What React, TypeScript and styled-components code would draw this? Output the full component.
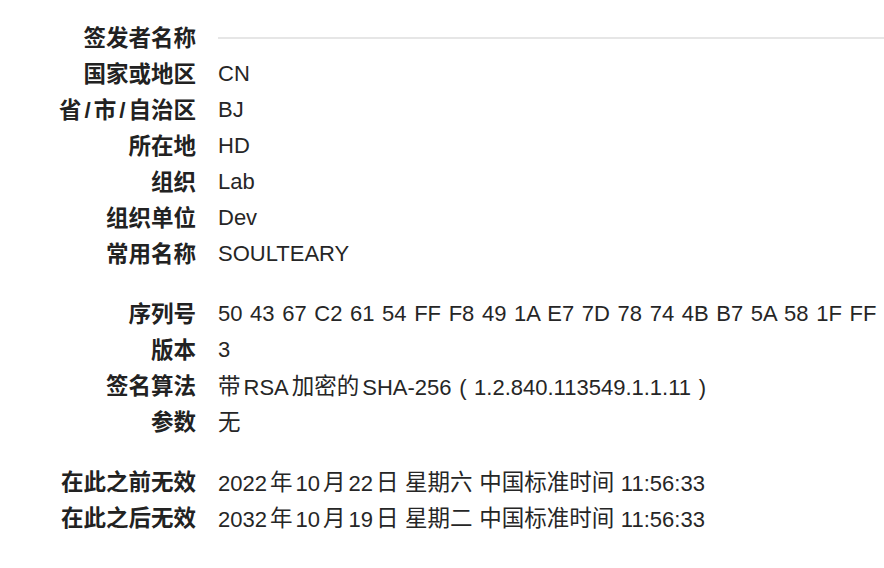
import React from "react";
import styled, { createGlobalStyle } from "styled-components";

const Global = createGlobalStyle`
  html, body { margin: 0; padding: 0; background: #ffffff; }
  body {
    font-family: "Liberation Sans", "Noto Sans CJK SC", sans-serif;
    color: #262626;
  }
`;

const Page = styled.div`
  width: 884px;
  height: 568px;
  padding-top: 20px;
  box-sizing: border-box;
  display: flex;
  flex-direction: column;
  gap: 24px;
  overflow: hidden;
`;

const Section = styled.div`
  display: grid;
  grid-template-columns: 196px 1fr;
  column-gap: 22px;
`;

const Label = styled.div`
  font-family: "Noto Sans CJK SC", "Liberation Sans", sans-serif;
  font-weight: 700;
  font-size: 22.5px;
  line-height: 32px;
  height: 36px;
  text-align: right;
  white-space: nowrap;
  color: #222222;
`;

const Slash = styled.span`
  font-family: "Liberation Sans", sans-serif;
  margin: 0 3px;
`;

const Value = styled.div<{ $spread?: number }>`
  font-family: "Liberation Sans", "Noto Sans CJK SC", sans-serif;
  font-size: 22px;
  line-height: 36px;
  height: 36px;
  white-space: nowrap;
  color: #262626;
  word-spacing: ${(p) => p.$spread ?? 0}px;
  display: flex;
  align-items: center;
`;

const Cjk = styled.span<{ $lead?: boolean; $trail?: boolean }>`
  font-family: "Noto Sans CJK SC", sans-serif;
  font-size: 22.5px;
  vertical-align: 1px;
  margin-left: ${(p) => (p.$lead ? "3px" : "0")};
  margin-right: ${(p) => (p.$trail ? "3px" : "0")};
`;

const Latin = styled.span`
  white-space: pre;
`;

const Rule = styled.div`
  flex: 1;
  height: 2px;
  background: #e6e6e6;
`;

const isCjk = (c: string) => /[\u3000-\u9fff\uff00-\uffef]/.test(c);

function Mixed({ text }: { text: string }) {
  const runs: { cjk: boolean; s: string }[] = [];
  for (const ch of text) {
    const c = isCjk(ch);
    const last = runs[runs.length - 1];
    if (last && last.cjk === c) last.s += ch;
    else runs.push({ cjk: c, s: ch });
  }
  return (
    <span>
      {runs.map((r, i) => {
        if (!r.cjk) return <Latin key={i}>{r.s}</Latin>;
        const prev = runs[i - 1];
        const next = runs[i + 1];
        const lead = !!prev && !/\s$/.test(prev.s);
        const trail = !!next && !/^\s/.test(next.s);
        return (
          <Cjk key={i} $lead={lead} $trail={trail}>
            {r.s}
          </Cjk>
        );
      })}
    </span>
  );
}

function LabelText({ text }: { text: string }) {
  const parts = text.split("/");
  return (
    <Label>
      {parts.map((p, i) => (
        <React.Fragment key={i}>
          {i > 0 && <Slash>/</Slash>}
          {p}
        </React.Fragment>
      ))}
    </Label>
  );
}

type Row = [string, string, number?];

const issuer: Row[] = [
  ["国家或地区", "CN"],
  ["省/市/自治区", "BJ"],
  ["所在地", "HD"],
  ["组织", "Lab"],
  ["组织单位", "Dev"],
  ["常用名称", "SOULTEARY"],
];

const cert: Row[] = [
  ["序列号", "50 43 67 C2 61 54 FF F8 49 1A E7 7D 78 74 4B B7 5A 58 1F FF", 1.5],
  ["版本", "3"],
  ["签名算法", "带RSA加密的SHA-256 ( 1.2.840.113549.1.1.11 )", 1.5],
  ["参数", "无"],
];

const validity: Row[] = [
  ["在此之前无效", "2022年10月22日 星期六 中国标准时间 11:56:33", 0.5],
  ["在此之后无效", "2032年10月19日 星期二 中国标准时间 11:56:33", 0.5],
];

function Rows({ rows }: { rows: Row[] }) {
  return (
    <>
      {rows.map(([k, v, spread]) => (
        <React.Fragment key={k}>
          <LabelText text={k} />
          <Value $spread={spread}>
            <Mixed text={v} />
          </Value>
        </React.Fragment>
      ))}
    </>
  );
}

export default function App() {
  return (
    <>
      <Global />
      <Page>
        <Section>
          <LabelText text="签发者名称" />
          <Value>
            <Rule />
          </Value>
          <Rows rows={issuer} />
        </Section>
        <Section>
          <Rows rows={cert} />
        </Section>
        <Section>
          <Rows rows={validity} />
        </Section>
      </Page>
    </>
  );
}
